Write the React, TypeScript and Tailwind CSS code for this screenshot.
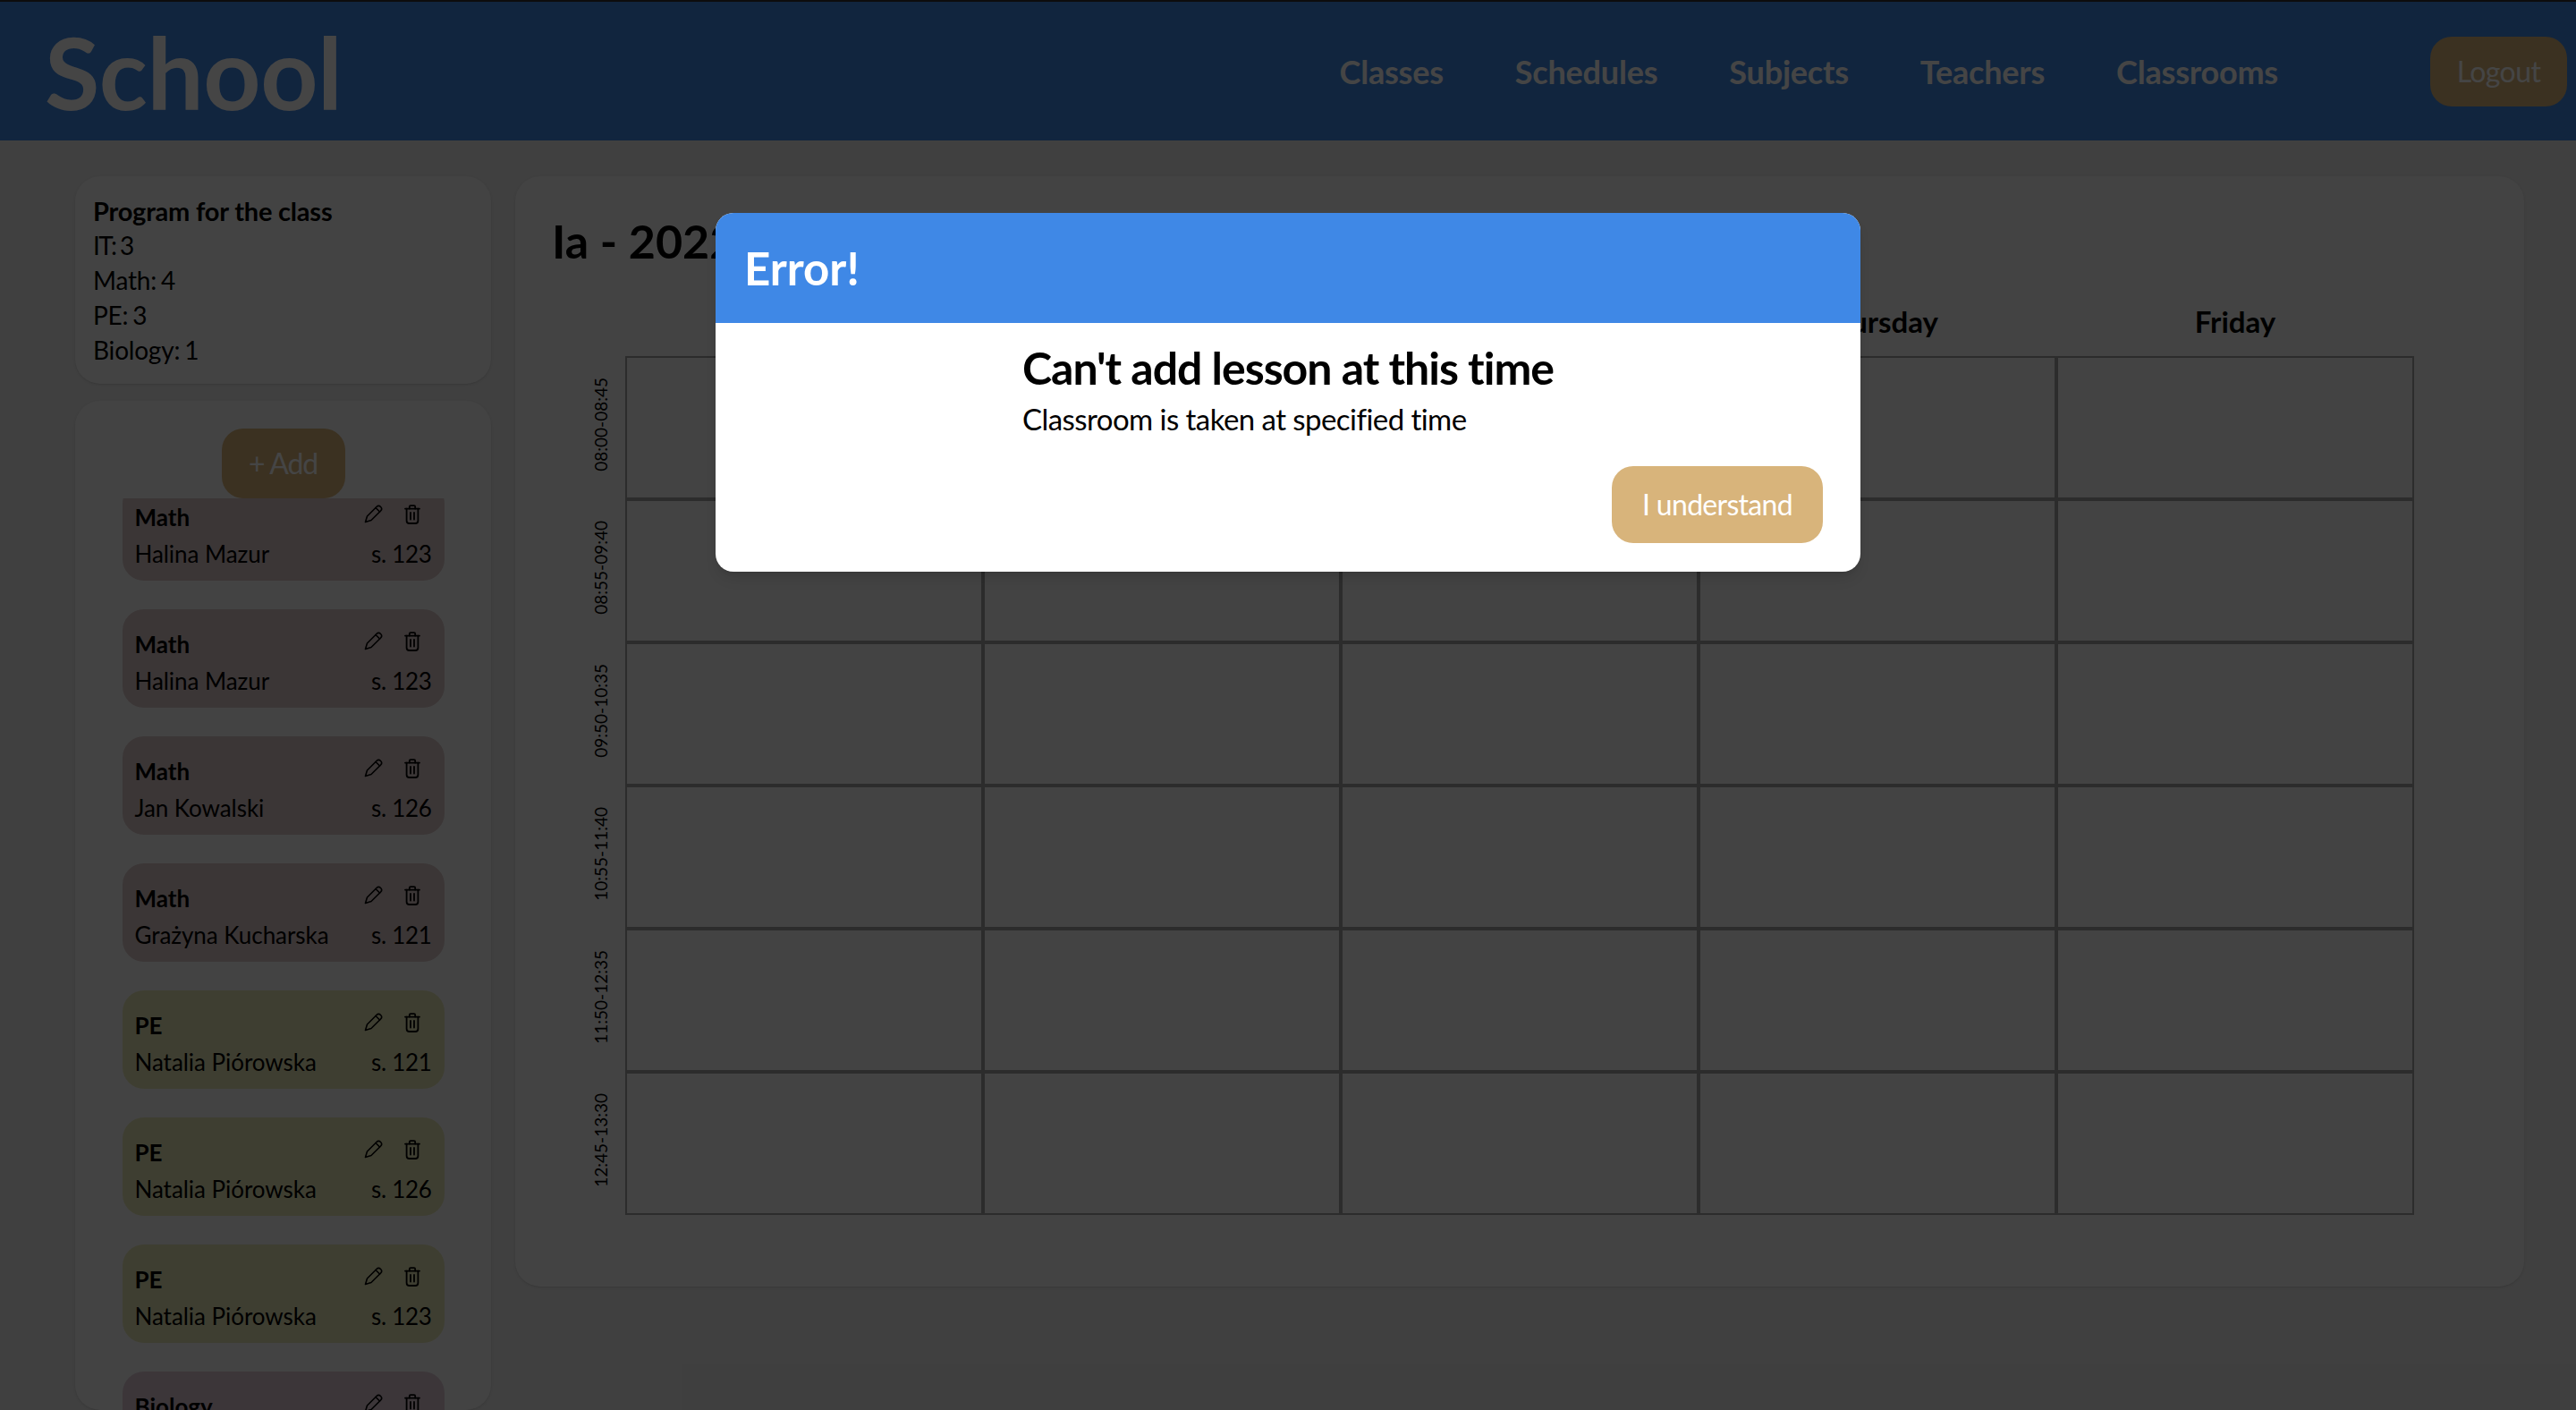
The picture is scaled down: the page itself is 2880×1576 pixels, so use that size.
import React from "react";

const PencilIcon = () => (
  <svg width="21" height="21" viewBox="0 0 21 21" fill="none" stroke="currentColor" strokeWidth="1.6" strokeLinejoin="round" strokeLinecap="round">
    <path d="M1.5 19.5 L3.5 13 L14 2.5 A3.2 3.2 0 0 1 18.6 7 L8 17.5 Z" />
    <path d="M13 3.5 L17.5 8" />
  </svg>
);

const TrashIcon = () => (
  <svg width="18" height="22" viewBox="0 0 18 22" fill="none" stroke="currentColor" strokeWidth="1.8" strokeLinejoin="round" strokeLinecap="round">
    <path d="M1 4.6H17" />
    <path d="M5.8 4.6V2.4Q5.8 1.2 7 1.2H11Q12.2 1.2 12.2 2.4V4.6" />
    <path d="M2.6 4.6V18A3 3 0 0 0 5.6 21H12.4A3 3 0 0 0 15.4 18V4.6" />
    <path d="M7 9V16.5" />
    <path d="M11 9V16.5" />
  </svg>
);

type Lesson = { title: string; teacher: string; room: string; tone: string };

const lessons: Lesson[] = [
  { title: "Math", teacher: "Halina Mazur", room: "s. 123", tone: "bg-[#d9c6c6]" },
  { title: "Math", teacher: "Halina Mazur", room: "s. 123", tone: "bg-[#d9c6c6]" },
  { title: "Math", teacher: "Jan Kowalski", room: "s. 126", tone: "bg-[#d9c6c6]" },
  { title: "Math", teacher: "Grażyna Kucharska", room: "s. 121", tone: "bg-[#d9c6c6]" },
  { title: "PE", teacher: "Natalia Piórowska", room: "s. 121", tone: "bg-[#e6e6b6]" },
  { title: "PE", teacher: "Natalia Piórowska", room: "s. 126", tone: "bg-[#e6e6b6]" },
  { title: "PE", teacher: "Natalia Piórowska", room: "s. 123", tone: "bg-[#e6e6b6]" },
  { title: "Biology", teacher: "Anna Nowak", room: "s. 121", tone: "bg-[#dcc8d4]" },
];

const times = ["08:00-08:45", "08:55-09:40", "09:50-10:35", "10:55-11:40", "11:50-12:35", "12:45-13:30"];
const days = ["Monday", "Tuesday", "Wednesday", "Thursday", "Friday"];
const navItems = ["Classes", "Schedules", "Subjects", "Teachers", "Classrooms"];

export default function App() {
  return (
    <div className="relative h-[1576px] overflow-hidden bg-[#ebebeb] font-[Lato,sans-serif] text-black">
      <div className="flex h-[157px] items-center border-t-2 border-[#303030] bg-[#3f88e6] pr-[10px] pl-[50px]">
        <div className="text-[112px] leading-none font-bold tracking-[-0.4px] text-white">School</div>
        <nav className="ml-auto flex items-center gap-[80px] text-[36px] font-bold tracking-[-0.2px] text-white">
          {navItems.map((n) => (
            <a key={n}>{n}</a>
          ))}
        </nav>
        <button className="ml-[170px] h-[78px] w-[153px] rounded-[24px] bg-[#d8b47b] text-[32px] tracking-[-0.6px] text-white">Logout</button>
      </div>

      <div className="flex items-start gap-[27px] pt-[40px] pr-[58px] pl-[84px]">
        <aside className="flex h-[1379px] w-[465px] shrink-0 flex-col gap-[19px]">
          <div className="h-[232px] rounded-[28px] bg-[#f8f8f8] px-[20px] pt-[19px] text-[28px] leading-[39px] tracking-[-0.2px] shadow-sm">
            <div className="text-[29px] font-bold">Program for the class</div>
            <div className="tracking-[-1.5px] [word-spacing:-1px]">IT: 3</div>
            <div className="[word-spacing:-2px]">Math: 4</div>
            <div className="[word-spacing:-2px]">PE: 3</div>
            <div className="[word-spacing:-2px]">Biology: 1</div>
          </div>
          <div className="flex min-h-0 flex-1 flex-col items-center rounded-[28px] bg-[#f8f8f8] pt-[31px] shadow-sm">
            <button className="h-[78px] w-[138px] shrink-0 rounded-[24px] bg-[#d8b47b] text-[32px] tracking-[-1.2px] text-white">+ Add</button>
            <div className="min-h-0 w-[360px] flex-1 overflow-hidden">
              <div className="-mt-[18px] flex flex-col gap-[32px]">
                {lessons.map((l, i) => (
                  <div key={i} className={`h-[110px] shrink-0 rounded-[24px] pt-[18px] pr-[14px] pl-[14px] ${l.tone}`}>
                    <div className="flex items-start justify-between">
                      <span className="text-[26px] leading-[43px] font-bold">{l.title}</span>
                      <span className="mt-[7px] mr-[13px] flex items-start gap-[24px]">
                        <PencilIcon />
                        <TrashIcon />
                      </span>
                    </div>
                    <div className="flex items-center justify-between text-[26px] leading-[38px]">
                      <span className="tracking-[-0.05px]">{l.teacher}</span>
                      <span className="tracking-[-0.3px]">{l.room}</span>
                    </div>
                  </div>
                ))}
              </div>
            </div>
          </div>
        </aside>

        <main className="flex-1 rounded-[28px] bg-[#f8f8f8] pt-[41px] pr-[123px] pb-[80px] pl-[41px] shadow-sm">
          <h1 className="text-[52px] leading-[62px] font-bold">Ia - 2022/2023</h1>
          <div className="mt-[37px] mb-[17px] flex pl-[82px]">
            {days.map((d) => (
              <div key={d} className="w-[400px] text-center text-[33px] leading-[44px] font-bold">
                {d}
              </div>
            ))}
          </div>
          <div className="flex">
            <div className="flex w-[82px] shrink-0 flex-col">
              {times.map((t) => (
                <div key={t} className="flex h-[160px] items-center justify-end pr-[18px] pb-[7px]">
                  <span className="rotate-180 text-[19px] leading-[19px] [writing-mode:vertical-rl]">{t}</span>
                </div>
              ))}
            </div>
            <div className="grid w-[2000px] grid-cols-5">
              {Array.from({ length: 30 }).map((_, i) => (
                <div key={i} className="h-[160px] border-2 border-[#a2a2a2]" />
              ))}
            </div>
          </div>
        </main>
      </div>

      <div className="absolute inset-0 flex justify-center bg-black/[0.73] pt-[238px]">
        <div className="flex h-[401px] w-[1280px] flex-col overflow-hidden rounded-[20px] bg-white shadow-lg">
          <div className="flex h-[123px] shrink-0 items-center bg-[#3f88e6] pt-[2px] pl-[32px] text-[51px] font-bold text-white">Error!</div>
          <div className="flex flex-1 flex-col pt-[20px] pr-[42px] pb-[32px]">
            <div className="self-center pl-[42px]">
              <div className="text-[50px] leading-[60px] font-bold tracking-[-1px]">Can't add lesson at this time</div>
              <div className="mt-[5px] text-[33px] leading-[45px] tracking-[-0.56px]">Classroom is taken at specified time</div>
            </div>
            <button className="mt-auto h-[86px] w-[236px] self-end rounded-[24px] bg-[#d8b47b] text-[32px] tracking-[-0.7px] text-white">I understand</button>
          </div>
        </div>
      </div>
    </div>
  );
}
